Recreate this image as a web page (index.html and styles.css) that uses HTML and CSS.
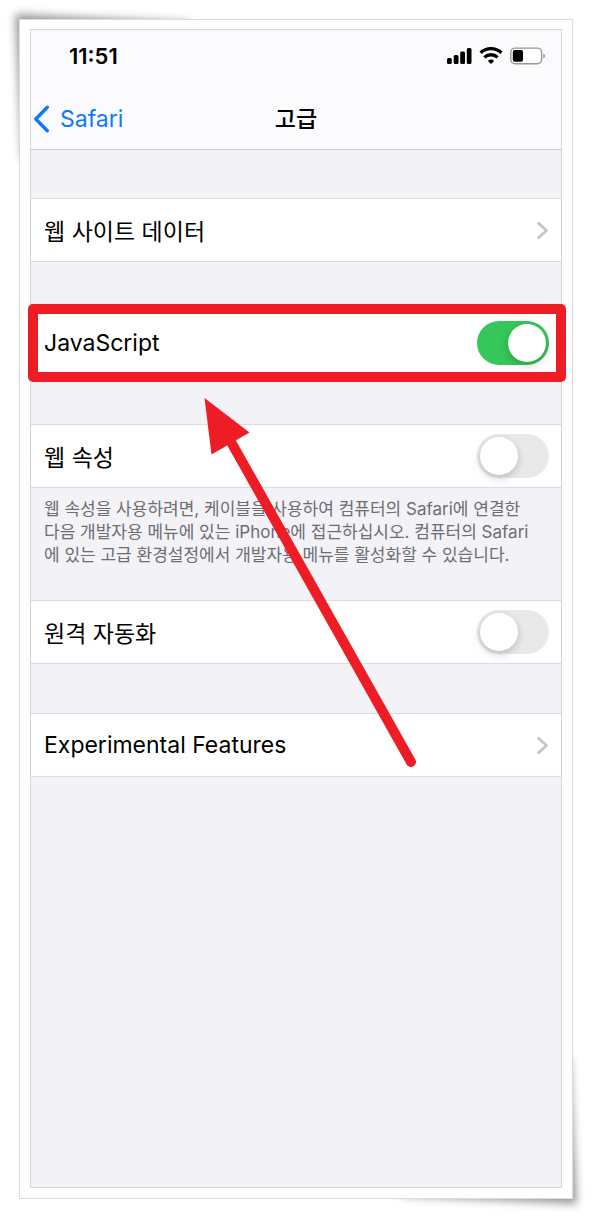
FILE: index.html
```html
<!DOCTYPE html>
<html lang="ko">
<head>
<meta charset="utf-8">
<meta name="viewport" content="width=device-width, initial-scale=1">
<title>고급</title>
<link rel="stylesheet" href="styles.css">
</head>
<body>
<div class="frame">
  <svg class="curl curl-start" viewBox="0 0 200 170" aria-hidden="true"><polygon points="15,14 190,22 195,60 60,165 22,160"/></svg>
  <svg class="curl curl-end" viewBox="0 0 200 170" aria-hidden="true"><polygon points="185,156 10,148 5,110 140,5 178,10"/></svg>
  <div class="paper">
    <main class="screen">
      <header class="top">
        <div class="status">
          <span class="time">11:51</span>
          <div class="indicators">
            <svg width="25" height="18" viewBox="0 0 25 18" aria-hidden="true">
              <rect x="0" y="11" width="4.8" height="6" rx="1.5"/><rect x="6.7" y="8" width="4.8" height="9" rx="1.5"/><rect x="13.2" y="4.5" width="4.8" height="12.5" rx="1.5"/><rect x="19.8" y="1" width="4.7" height="16" rx="1.5"/>
            </svg>
            <svg width="24" height="18" viewBox="0 0 24 18" aria-hidden="true">
              <g fill="none" stroke="#000" stroke-width="3.3"><path d="M1.6 5.8a15.2 15.2 0 0 1 20.8 0"/><path d="M5.4 10.4a9.6 9.6 0 0 1 13.2 0"/></g>
              <path d="M8.9 13.9a4.8 4.8 0 0 1 6.2 0L12 17z"/>
            </svg>
            <svg width="36" height="18" viewBox="0 0 36 18" aria-hidden="true">
              <rect x="0.8" y="1.1" width="30.8" height="15.6" rx="4.2" fill="#fff" stroke="#999" stroke-width="1.4"/>
              <rect x="2.8" y="3" width="10.2" height="11.8" rx="2"/>
              <path d="M33.3 6.4v5.2a2.8 2.8 0 0 0 0-5.2z" fill="#999"/>
            </svg>
          </div>
        </div>
        <nav class="nav">
          <a class="back" href="#">
            <svg width="17" height="28" viewBox="0 0 17 28" aria-hidden="true"><path d="M14.3 2.3 2.8 14l11.5 11.7" fill="none" stroke="#0a7aff" stroke-width="3.4" stroke-linecap="round" stroke-linejoin="round"/></svg>
            <span>Safari</span>
          </a>
          <h1 class="title">고급</h1>
        </nav>
      </header>

      <div class="groups">
        <a class="row" href="#">
          <span>웹 사이트 데이터</span>
          <svg class="chevron" width="13" height="19" viewBox="0 0 13 19" aria-hidden="true"><path d="m2.5 2.2 8 7.3-8 7.3"/></svg>
        </a>
        <div class="row marked">
          <label for="javascript">JavaScript</label>
          <input class="switch" id="javascript" type="checkbox" role="switch" checked>
        </div>
        <section class="described">
          <div class="row">
            <label for="inspector">웹 속성</label>
            <input class="switch" id="inspector" type="checkbox" role="switch" aria-describedby="inspector-note">
          </div>
          <p class="note" id="inspector-note">웹 속성을 사용하려면, 케이블을 사용하여 컴퓨터의 Safari에 연결한<br>다음 개발자용 메뉴에 있는 iPhone에 접근하십시오. 컴퓨터의 Safari<br>에 있는 고급 환경설정에서 개발자용 메뉴를 활성화할 수 있습니다.</p>
        </section>
        <div class="row">
          <label for="automation">원격 자동화</label>
          <input class="switch" id="automation" type="checkbox" role="switch">
        </div>
        <a class="row" href="#">
          <span>Experimental Features</span>
          <svg class="chevron" width="13" height="19" viewBox="0 0 13 19" aria-hidden="true"><path d="m2.5 2.2 8 7.3-8 7.3"/></svg>
        </a>
      </div>

      <svg class="arrow" width="214" height="372" viewBox="0 0 214 372" aria-hidden="true">
        <path d="M22 35 207 364" fill="none" stroke="#ee1c25" stroke-width="10" stroke-linecap="round"/>
        <path d="M0.5 0 45.5 34.5 7.5 56.5z" fill="#ee1c25"/>
      </svg>
    </main>
  </div>
</div>
</body>
</html>
```

FILE: styles.css
```css
* {
  box-sizing: border-box;
}

body {
  margin: 0;
  background: #fff;
  color: #000;
  font-family: Inter, "Noto Sans CJK KR", sans-serif;
  font-size: 23px;
}

a {
  color: inherit;
  text-decoration: none;
}

.frame {
  position: relative;
  display: flex;
  min-height: 100vh;
  padding: 19px;
  overflow: hidden;
}

.curl {
  position: absolute;
  width: 200px;
  height: 170px;
  fill: #999;
  filter: blur(4px);
}

.curl-start {
  top: 0;
  left: 0;
}

.curl-end {
  right: 0;
  bottom: 0;
}

.paper {
  position: relative;
  display: flex;
  flex: 1;
  padding: 9px 10px 10px;
  border: 1px solid #dcdcdc;
  background: #fff;
}

.screen {
  position: relative;
  flex: 1;
  min-width: 0;
  border: 1px solid #d5d5d9;
  background: #f2f2f7;
}

.top {
  display: flex;
  flex-direction: column;
  height: 120px;
  border-bottom: 1px solid #cdcdd2;
  background: #fbfbfd;
}

.status {
  display: flex;
  align-items: center;
  justify-content: space-between;
  height: 52px;
  padding: 0 15px 0 38px;
}

.time {
  font-size: 22px;
  font-weight: 600;
}

.indicators {
  display: flex;
  gap: 7px;
}

.nav {
  display: grid;
  grid-template-columns: 1fr auto 1fr;
  align-items: center;
  flex: 1;
  padding: 6px 2px 0;
}

.back {
  display: flex;
  align-items: center;
  gap: 10px;
  color: #0a7aff;
}

.title {
  margin: 0;
  padding-bottom: 4px;
  font-size: 23px;
  font-weight: 500;
}

.groups {
  display: flex;
  flex-direction: column;
  gap: 49px;
  padding-top: 48px;
}

.row {
  position: relative;
  display: flex;
  align-items: center;
  justify-content: space-between;
  height: 64px;
  padding: 0 12px 0 13px;
  border: solid #dcdce0;
  border-width: 1px 0;
  background: #fff;
}

.marked::after {
  position: absolute;
  inset: -8px -5px -8px -3px;
  border: 10px solid #ee1c25;
  border-radius: 5px;
  content: "";
  pointer-events: none;
}

.chevron {
  fill: none;
  stroke: #c4c4c7;
  stroke-width: 2.6;
  stroke-linecap: round;
  stroke-linejoin: round;
}

.switch {
  width: 72px;
  height: 44px;
  margin: 0;
  padding: 3px;
  border-radius: 22px;
  background: #e9e9ea;
  appearance: none;
}

.switch::before {
  display: block;
  width: 38px;
  height: 38px;
  border-radius: 50%;
  background: #fff;
  box-shadow: 0 3px 8px rgb(0 0 0 / 20%);
  content: "";
}

.switch:checked {
  background: #35c759;
}

.switch:checked::before {
  margin-left: auto;
}

.described {
  height: 127px;
}

.note {
  margin: 0;
  padding: 10px 13px 0;
  color: #6d6d72;
  font-size: 17px;
  line-height: 23px;
  white-space: nowrap;
}

.arrow {
  position: absolute;
  top: 368px;
  left: 173px;
  pointer-events: none;
}
```
